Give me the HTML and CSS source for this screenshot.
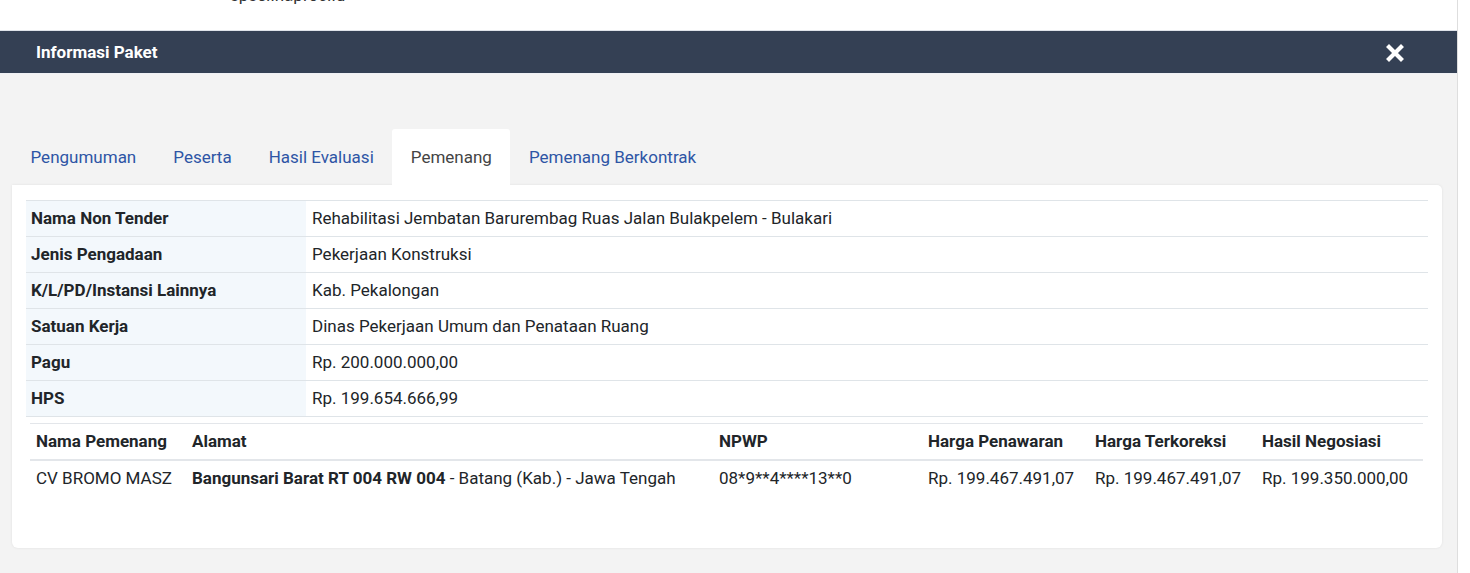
FILE: index.html
```html
<!DOCTYPE html>
<html lang="id">
<head>
<meta charset="utf-8">
<title>Informasi Paket</title>
<link rel="stylesheet" href="styles.css">
</head>
<body>
<div class="frame">
  <div class="main">
    <div class="topstrip"><span class="site">spse.inaproc.id</span></div>
    <div class="modal-header">
      <h4 class="modal-title">Informasi Paket</h4>
      <button class="close" type="button" aria-label="Close">
        <svg width="18" height="18" viewBox="0 0 18 18"><path d="M3 3 L15 15 M15 3 L3 15" stroke="#fff" stroke-width="4.2" stroke-linecap="square"/></svg>
      </button>
    </div>
    <div class="modal-body">
      <ul class="tabs">
        <li class="tab">Pengumuman</li>
        <li class="tab">Peserta</li>
        <li class="tab">Hasil Evaluasi</li>
        <li class="tab active">Pemenang</li>
        <li class="tab">Pemenang Berkontrak</li>
      </ul>
      <div class="panel">
        <table class="info">
          <tr><th>Nama Non Tender</th><td>Rehabilitasi Jembatan Barurembag Ruas Jalan Bulakpelem - Bulakari</td></tr>
          <tr><th>Jenis Pengadaan</th><td>Pekerjaan Konstruksi</td></tr>
          <tr><th>K/L/PD/Instansi Lainnya</th><td>Kab. Pekalongan</td></tr>
          <tr><th>Satuan Kerja</th><td>Dinas Pekerjaan Umum dan Penataan Ruang</td></tr>
          <tr><th>Pagu</th><td>Rp. 200.000.000,00</td></tr>
          <tr><th>HPS</th><td>Rp. 199.654.666,99</td></tr>
        </table>
        <table class="winners">
          <thead>
            <tr>
              <th class="c-nama">Nama Pemenang</th>
              <th class="c-alamat">Alamat</th>
              <th class="c-npwp">NPWP</th>
              <th class="c-harga">Harga Penawaran</th>
              <th class="c-harga">Harga Terkoreksi</th>
              <th class="c-harga">Hasil Negosiasi</th>
            </tr>
          </thead>
          <tbody>
            <tr>
              <td>CV BROMO MASZ</td>
              <td><b>Bangunsari Barat RT 004 RW 004</b> - Batang (Kab.) - Jawa Tengah</td>
              <td>08*9**4****13**0</td>
              <td>Rp. 199.467.491,07</td>
              <td>Rp. 199.467.491,07</td>
              <td>Rp. 199.350.000,00</td>
            </tr>
          </tbody>
        </table>
      </div>
    </div>
  </div>
  <div class="scrolltrack"></div>
</div>
</body>
</html>
```

FILE: styles.css
```css
* { box-sizing: border-box; }
html, body { margin: 0; padding: 0; }
body {
  font-family: Roboto, "Liberation Sans", Arial, sans-serif;
  font-size: 17px;
  color: #212529;
  background: #ffffff;
  width: 1470px;
  height: 573px;
  overflow: hidden;
}
.frame { display: flex; height: 573px; }
.main { width: 1457px; display: flex; flex-direction: column; }
.scrolltrack {
  width: 13px;
  background: #ffffff;
  border-left: 1px solid #dedede;
}
.topstrip {
  height: 31px;
  background: #ffffff;
  padding-left: 230px;
  overflow: hidden;
  border-bottom: 1px solid #dfe3ea;
}
.site {
  display: block;
  margin-top: -15px;
  font-size: 17px;
  line-height: 20px;
  color: #333333;
}
.modal-header {
  height: 43px;
  background: #344054;
  display: flex;
  align-items: center;
  justify-content: space-between;
  padding: 0 53px 0 36px;
  border-bottom: 1px solid #eef0f4;
}
.modal-title {
  margin: 0;
  color: #ffffff;
  font-size: 17px;
  font-weight: 700;
}
.close {
  background: none;
  border: 0;
  padding: 0;
  display: flex;
  margin-top: 1px;
}
.modal-body {
  flex: 1;
  background: #f3f3f3;
  padding: 55px 15px 0 12px;
}
.tabs {
  list-style: none;
  margin: 0;
  padding: 0;
  display: flex;
  height: 56px;
}
.tab {
  padding: 0 18.5px;
  line-height: 56px;
  color: #2e55a5;
  font-size: 17px;
  font-weight: 400;
}
.tab.active {
  background: #ffffff;
  color: #444444;
  border-radius: 3px 3px 0 0;
}
.panel {
  background: #ffffff;
  border-radius: 0 5px 6px 6px;
  box-shadow: 0 0 3px rgba(0,0,0,0.08);
  padding: 15px 14px 52px 14px;
  height: 363px;
}
table { border-collapse: collapse; width: 100%; }
.info th, .info td {
  border-top: 1px solid #dfe4e8;
  padding: 6px 5px;
  line-height: 23px;
  text-align: left;
  vertical-align: top;
}
.info tr:last-child th, .info tr:last-child td { border-bottom: 1px solid #dfe4e8; }
.info th {
  width: 280px;
  background: #f3f8fc;
  font-weight: 700;
  color: #212529;
}
.info td { padding-left: 6px; color: #212529; }
.winners {
  margin: 6px 0 0 4px;
  width: 1393px;
}
.winners th, .winners td {
  padding: 6px 6px;
  line-height: 23px;
  text-align: left;
  vertical-align: top;
  white-space: nowrap;
}
.winners th {
  border-top: 1px solid #e3e6ea;
  border-bottom: 2px solid #e3e6ea;
  font-weight: 700;
  color: #212529;
}
.winners td { color: #212529; }
.c-nama { width: 156px; }
.c-alamat { width: 527px; }
.c-npwp { width: 209px; }
.c-harga { width: 167px; }
```
